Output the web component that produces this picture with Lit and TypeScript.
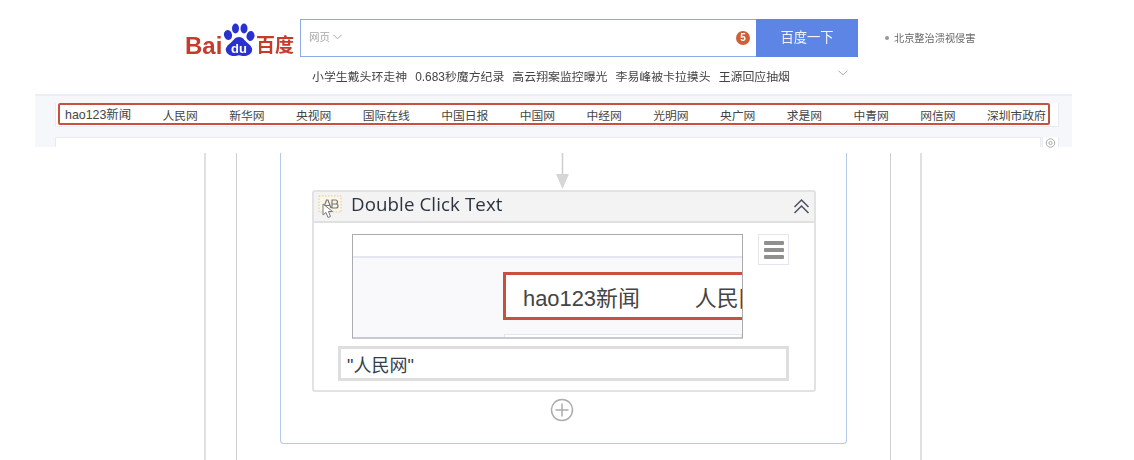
import { LitElement, html, css } from "lit";
import { customElement } from "lit/decorators.js";

const NAV = ["人民网","新华网","央视网","国际在线","中国日报","中国网","中经网","光明网","央广网","求是网","中青网","网信网","深圳市政府"];
const HOT = ["小学生戴头环走神","0.683秒魔方纪录","高云翔案监控曝光","李易峰被卡拉摸头","王源回应抽烟"];

@customElement("app-root")
export class AppRoot extends LitElement {
  static styles = css`
    :host { display: block; width: 1134px; height: 460px; overflow: hidden; background: #fff;
      font-family: "Liberation Sans", "Noto Sans CJK SC", sans-serif; color: #333; }
    .top { height: 153px; box-sizing: border-box; display: flex; flex-direction: column; filter: blur(0.45px); }
    .head { height: 65px; box-sizing: border-box; padding: 19px 0 0 185px; display: flex; align-items: flex-start; }
    .logo { width: 115px; height: 38px; display: flex; align-items: flex-end; color: #c63c2c; font-weight: 700; padding-bottom: 1px; box-sizing: border-box; }
    .bai { font-size: 24px; line-height: 20px; width: 38px; flex: none; white-space: nowrap; }
    .paw { position: relative; width: 32px; height: 33px; flex: none; }
    .paw svg { display: block; }
    .du { position: absolute; left: 4px; bottom: 1px; width: 24px; text-align: center; color: #fff; font: 700 13px/13px "Liberation Sans", sans-serif; }
    .cn { font-size: 19px; line-height: 22px; margin: 0 0 -1px 1px; white-space: nowrap; }
    .search { width: 456px; height: 38px; box-sizing: border-box; border: 1px solid #8ea9ea; border-right: 0; display: flex; align-items: center; padding: 0 6px 3px 8px; justify-content: space-between; }
    .tab { font-size: 10.5px; color: #a8a8a8; display: flex; align-items: center; gap: 3px; }
    .badge { width: 14px; height: 14px; border-radius: 50%; background: #cf5f38; color: #fff; font: 700 10px/14px "Liberation Sans", sans-serif; text-align: center; margin: 3px 0 0; }
    .btn { width: 102px; height: 38px; background: #5c85e6; color: #f2f5ff; font-size: 13.3px; line-height: 38px; text-align: center; }
    .note { margin-left: 27px; height: 38px; display: flex; align-items: center; gap: 5px; font-size: 10.2px; color: #666; padding-bottom: 1px; box-sizing: border-box; }
    .dot { width: 4px; height: 4px; border-radius: 50%; background: #999; }
    .hot { height: 29px; box-sizing: border-box; padding: 0 0 9px 312px; display: flex; align-items: center; font-size: 11.9px; color: #444; }
    .hot span { margin-right: 8px; white-space: nowrap; }
    .hot svg { margin-left: 40px; margin-top: -4px; }
    .band { margin-left: 35px; width: 1037px; height: 53px; box-sizing: border-box; background: #f6f7fa; border-top: 2px solid #eceef3; padding: 7px 0 0 20px; }
    .navbox { width: 1004px; height: 24px; box-sizing: border-box; background: #fff; border: 1px solid #e9ebf1; border-top: 0; padding-left: 2px; }
    .nav { width: 992px; height: 22px; box-sizing: border-box; border: 2px solid #c8503f; border-radius: 2px; display: flex; justify-content: space-between; align-items: center; padding: 0 2px 0 5px; font-size: 11.8px; color: #444; }
    .nav span { white-space: nowrap; }
    .nav .first { font-size: 12.4px; }
    .contentrow { display: flex; margin-top: 10px; height: 10px; }
    .content { width: 986px; background: #fff; border: 1px solid #e9ebf1; border-bottom: 0; box-sizing: border-box; }
    .gear { width: 17px; margin-left: 1px; box-sizing: border-box; border-right: 1px solid #e9ebf1; border-left: 1px solid #e9ebf1; display: flex; justify-content: center; background: #fff; }

    .flow { filter: blur(0.35px); width: 718px; height: 307px; box-sizing: border-box; margin-left: 204px; border-left: 2px solid #e0e0e0; border-right: 2px solid #e0e0e0; padding-left: 30px; }
    .l2 { width: 655px; height: 307px; box-sizing: border-box; border-left: 1px solid #cfcfcf; border-right: 1px solid #cfcfcf; padding-left: 43px; }
    .seq { width: 567px; height: 291px; box-sizing: border-box; border: 1px solid #b3c9e6; border-top: 0; border-radius: 0 0 4px 4px; padding-left: 31px; display: flex; flex-direction: column; }
    .arrow { margin-left: 243px; display: block; }
    .card { width: 504px; height: 202px; box-sizing: border-box; border: 2px solid #e2e2e2; border-radius: 3px; display: flex; flex-direction: column; }
    .chead { height: 31px; flex: none; background: #f3f3f3; border-bottom: 2px solid #e0e0e0; box-sizing: border-box; display: flex; align-items: center; padding: 0 4px; }
    .title { margin-left: 9px; font: 18.7px/26px "Open Sans", "DejaVu Sans", sans-serif; color: #2c3440; letter-spacing: 0.1px; flex: 1; margin-top: -6px; }
    .cbody { padding: 11px 23px 0 24px; display: flex; flex-direction: column; }
    .r1 { display: flex; padding-left: 14px; height: 105px; }
    .shot { width: 391px; height: 105px; box-sizing: border-box; border: 1px solid #ababab; border-bottom: 2px solid #c9c9d3; overflow: hidden; background: #f9f9fc; }
    .s1 { height: 21px; background: #fff; border-bottom: 2px solid #e4e6f2; }
    .redbox { margin: 14px 0 0 150px; width: 300px; height: 48px; box-sizing: border-box; border: 3px solid #c8503f; background: #fff; display: flex; align-items: center; padding-left: 17px; font-size: 21.9px; color: #444; white-space: nowrap; }
    .redbox span:last-child { margin-left: 55px; }
    .below { margin: 14px 0 0 151px; height: 6px; background: #fff; border: 1px solid #e4e6f2; border-bottom: 0; }
    .menu { width: 31px; height: 31px; margin: 0 0 0 15px; box-sizing: border-box; border: 1px solid #e4e4ee; display: flex; flex-direction: column; align-items: center; justify-content: center; gap: 3px; }
    .menu i { display: block; width: 20px; height: 4px; background: #909090; border-radius: 1px; }
    .input { width: 451px; height: 35px; margin-top: 7px; box-sizing: border-box; border: 3px solid #dedede; background: #fff; font-size: 18px; line-height: 34px; padding-left: 6px; color: #333e4e; overflow: hidden; }
    .plus { display: block; margin: 6px 0 0 238px; }
  `;

  render() {
    return html`
      <div class="top">
        <div class="head">
          <div class="logo">
            <span class="bai">Bai</span>
            <div class="paw">
              <svg width="32" height="33" viewBox="0 0 32 33" fill="#2932d0">
                <ellipse cx="5" cy="12" rx="4" ry="5" transform="rotate(-15 5 12)"/>
                <ellipse cx="12.500" cy="5.500" rx="3.500" ry="5"/>
                <ellipse cx="21" cy="5.500" rx="3.500" ry="5"/>
                <ellipse cx="27.500" cy="13" rx="4" ry="5" transform="rotate(12 27.500 13)"/>
                <path d="M16 14c4 0 5 3 8 5.500s6 5 5 8.500c-1 3.500-4.500 5-8 5-2 0-3.500-.8-5-.8s-3 .8-5 .8c-3.500 0-7-1.500-8-5-1-3.500 2-6 5-8.500s4-5.500 8-5.500z"/>
              </svg>
              <span class="du">du</span>
            </div>
            <span class="cn">百度</span>
          </div>
          <div class="search">
            <span class="tab">网页
              <svg width="9" height="6" viewBox="0 0 9 6" fill="none" stroke="#aaa"><path d="M.5 .8l4 4 4-4"/></svg>
            </span>
            <span class="badge">5</span>
          </div>
          <div class="btn">百度一下</div>
          <div class="note"><i class="dot"></i>北京整治溃视侵害</div>
        </div>
        <div class="hot">
          ${HOT.map((t) => html`<span>${t}</span>`)}
          <svg width="10" height="6" viewBox="0 0 10 6" fill="none" stroke="#aaa"><path d="M.5 .8l4.500 4 4.500-4"/></svg>
        </div>
        <div class="band">
          <div class="navbox">
            <div class="nav"><span class="first">hao123新闻</span>${NAV.map((t) => html`<span>${t}</span>`)}</div>
          </div>
          <div class="contentrow">
            <div class="content"></div>
            <div class="gear">
              <svg width="11" height="11" viewBox="0 0 11 11" fill="none" stroke="#aaa"><circle cx="5.500" cy="6" r="4.200"/><circle cx="5.500" cy="6" r="1.600"/></svg>
            </div>
          </div>
        </div>
      </div>
      <div class="flow">
        <div class="l2">
          <div class="seq">
            <svg class="arrow" width="16" height="37" viewBox="0 0 16 37">
              <path d="M7.500 0v23" stroke="#cdcdcd" stroke-width="1.500"/>
              <path d="M1 21h13l-6.500 15z" fill="#d6d6d6"/>
            </svg>
            <div class="card">
              <div class="chead">
                <svg width="24" height="24" viewBox="0 0 24 24">
                  <rect x="1" y="1" width="22" height="16" fill="#fbf6e8" stroke="#e3c98f" stroke-dasharray="1.500 1.500"/>
                  <path d="M5.500 13l3-8h1.500l3 8M7 10.500h5M14 5h3.500a2 2 0 0 1 0 4H14zM14 9h4a2 2 0 0 1 0 4h-4z" fill="none" stroke="#777" stroke-width="1.200"/>
                  <path d="M5 9v11l3-2.500 2 5 2.500-1-2-5h4z" fill="#fff" stroke="#777"/>
                </svg>
                <span class="title">Double Click Text</span>
                <svg width="17" height="17" viewBox="0 0 17 17" fill="none" stroke="#4a5260" stroke-width="1.500"><path d="M1.500 9l7-7 7 7M1.500 15l7-7 7 7"/></svg>
              </div>
              <div class="cbody">
                <div class="r1">
                  <div class="shot">
                    <div class="s1"></div>
                    <div class="redbox"><span>hao123新闻</span><span>人民网</span></div>
                    <div class="below"></div>
                  </div>
                  <div class="menu"><i></i><i></i><i></i></div>
                </div>
                <div class="input">"人民网"</div>
              </div>
            </div>
            <svg class="plus" width="24" height="24" viewBox="0 0 24 24" fill="none" stroke="#acacac" stroke-width="1.500">
              <circle cx="12" cy="12" r="10.500"/><path d="M12 5.500v13M5.500 12h13"/>
            </svg>
          </div>
        </div>
      </div>
    `;
  }
}
